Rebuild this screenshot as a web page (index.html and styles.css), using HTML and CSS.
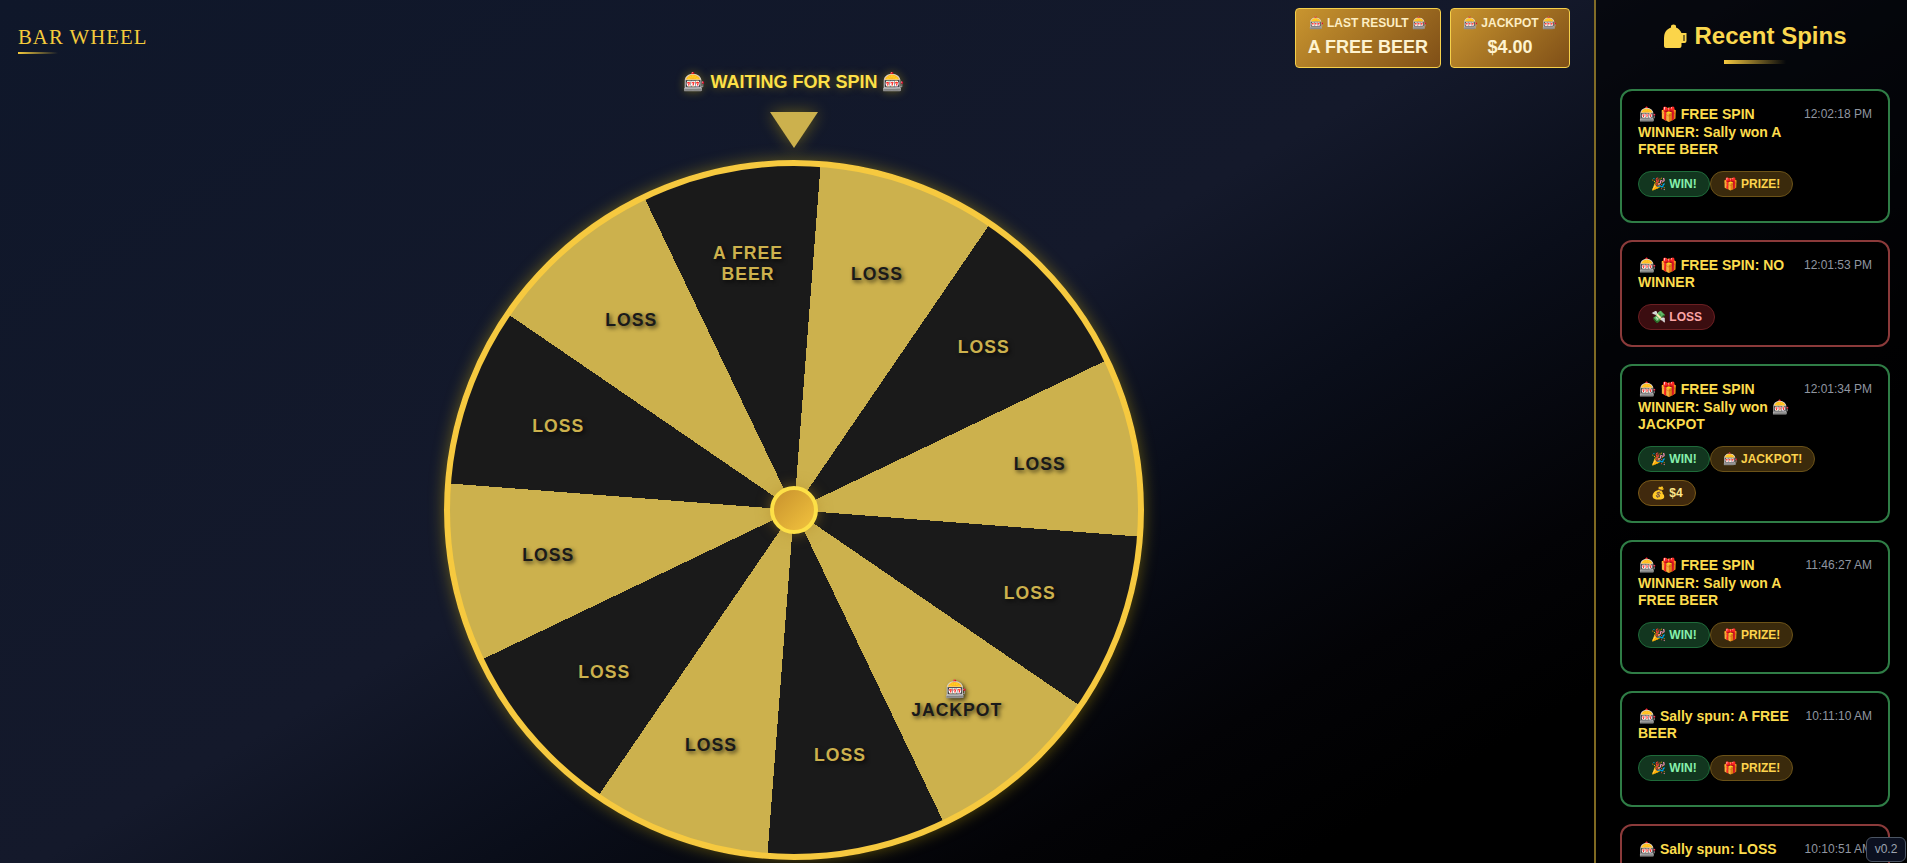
FILE: index.html
```html
<!DOCTYPE html>
<html lang="en">
<head>
<meta charset="utf-8">
<title>Bar Wheel</title>
<link rel="stylesheet" href="styles.css">
</head>
<body>
<div class="app">
  <main class="stage">
    <header class="topbar">
      <div class="brand">
        <h1 class="brand-name">BAR WHEEL</h1>
        <div class="brand-rule"></div>
      </div>
      <div class="stats">
        <div class="stat">
          <div class="stat-label">🎰 LAST RESULT 🎰</div>
          <div class="stat-value">A FREE BEER</div>
        </div>
        <div class="stat">
          <div class="stat-label">🎰 JACKPOT 🎰</div>
          <div class="stat-value">$4.00</div>
        </div>
      </div>
    </header>
    <div class="status">🎰 WAITING FOR SPIN 🎰</div>
    <div class="pointer"></div>
    <div class="wheel">
      <span class="seg seg-on-dark" style="--a:-10.6deg">A FREE BEER</span>
      <span class="seg seg-on-gold" style="--a:19.4deg">LOSS</span>
      <span class="seg seg-on-dark" style="--a:49.4deg">LOSS</span>
      <span class="seg seg-on-gold" style="--a:79.4deg">LOSS</span>
      <span class="seg seg-on-dark" style="--a:109.4deg">LOSS</span>
      <span class="seg seg-on-gold" style="--a:139.4deg">🎰 JACKPOT</span>
      <span class="seg seg-on-dark" style="--a:169.4deg">LOSS</span>
      <span class="seg seg-on-gold" style="--a:199.4deg">LOSS</span>
      <span class="seg seg-on-dark" style="--a:229.4deg">LOSS</span>
      <span class="seg seg-on-gold" style="--a:259.4deg">LOSS</span>
      <span class="seg seg-on-dark" style="--a:289.4deg">LOSS</span>
      <span class="seg seg-on-gold" style="--a:319.4deg">LOSS</span>
      <div class="hub"></div>
    </div>
  </main>
  <aside class="sidebar">
    <h2 class="side-title">
      <svg class="mug" viewBox="0 0 24 24" aria-hidden="true"><path fill-rule="evenodd" d="M2.5 24Q.5 24 .5 22V14Q.5 8 4 5.5 6 4 7.5 3.5V2Q7.5.5 10 .5 12.5.5 12.5 2V3.5Q16 4.5 18 9H23V17Q23 19 21 19H18V22Q18 24 16 24ZM20 11V17H21V11Z"/></svg>
      <span>Recent Spins</span>
    </h2>
    <div class="side-rule"></div>
    <div class="spins">
      <article class="card card-win card-spaced">
        <div class="card-head">
          <div class="card-title">🎰 🎁 FREE SPIN WINNER: Sally won A FREE BEER</div>
          <time class="card-time">12:02:18 PM</time>
        </div>
        <div class="pills"><span class="pill pill-win">🎉 WIN!</span><span class="pill pill-prize">🎁 PRIZE!</span></div>
      </article>
      <article class="card card-loss">
        <div class="card-head">
          <div class="card-title">🎰 🎁 FREE SPIN: NO WINNER</div>
          <time class="card-time">12:01:53 PM</time>
        </div>
        <div class="pills"><span class="pill pill-loss">💸 LOSS</span></div>
      </article>
      <article class="card card-win">
        <div class="card-head">
          <div class="card-title">🎰 🎁 FREE SPIN WINNER: Sally won 🎰 JACKPOT</div>
          <time class="card-time">12:01:34 PM</time>
        </div>
        <div class="pills"><span class="pill pill-win">🎉 WIN!</span><span class="pill pill-prize">🎰 JACKPOT!</span><span class="pill pill-money">💰 $4</span></div>
      </article>
      <article class="card card-win card-spaced">
        <div class="card-head">
          <div class="card-title">🎰 🎁 FREE SPIN WINNER: Sally won A FREE BEER</div>
          <time class="card-time">11:46:27 AM</time>
        </div>
        <div class="pills"><span class="pill pill-win">🎉 WIN!</span><span class="pill pill-prize">🎁 PRIZE!</span></div>
      </article>
      <article class="card card-win card-spaced">
        <div class="card-head">
          <div class="card-title">🎰 Sally spun: A FREE BEER</div>
          <time class="card-time">10:11:10 AM</time>
        </div>
        <div class="pills"><span class="pill pill-win">🎉 WIN!</span><span class="pill pill-prize">🎁 PRIZE!</span></div>
      </article>
      <article class="card card-loss">
        <div class="card-head">
          <div class="card-title">🎰 Sally spun: LOSS</div>
          <time class="card-time">10:10:51 AM</time>
        </div>
      </article>
    </div>
  </aside>
</div>
<div class="version">v0.2</div>
</body>
</html>
```
FILE: styles.css
```css
* { box-sizing: border-box; }

html, body {
  margin: 0;
  height: 100%;
  overflow: hidden;
}

body {
  font-family: "Liberation Sans", Arial, sans-serif;
  background: linear-gradient(150deg, #0f172a 0%, #14192b 45%, #0a0e1a 58%, #030306 73%, #000 82%);
  color: #fff;
}

.app {
  display: flex;
  height: 100vh;
}

/* main stage */
.stage {
  flex: 1;
  min-width: 0;
  padding-right: 6px;
  display: flex;
  flex-direction: column;
  align-items: center;
}

.topbar {
  align-self: stretch;
  display: flex;
  justify-content: space-between;
  align-items: flex-start;
  padding: 8px 18px 0 18px;
  height: 72px;
}

.brand { padding-top: 17px; }

.brand-name {
  margin: 0;
  font-family: "Liberation Serif", "Times New Roman", serif;
  font-size: 20.8px;
  font-weight: 400;
  line-height: 24px;
  letter-spacing: 1px;
  color: #f5cb3c;
}

.brand-rule {
  width: 40px;
  height: 2px;
  margin-top: 3px;
  background: linear-gradient(90deg, #f5cb3c, transparent);
}

.stats {
  display: flex;
  gap: 9px;
}

.stat {
  padding: 6px 12px 7px;
  border: 1px solid #f5d04a;
  border-radius: 4px;
  background: linear-gradient(135deg, #c9952f, #7f4f17);
  text-align: center;
  height: 60px;
}

.stat-label {
  font-size: 12px;
  line-height: 17px;
  font-weight: 700;
  color: #fdeec4;
  white-space: nowrap;
}

.stat-value {
  margin-top: 5px;
  font-size: 18px;
  line-height: 21px;
  font-weight: 700;
  color: #fef3d0;
  white-space: nowrap;
}

.status {
  font-size: 18px;
  line-height: 20px;
  font-weight: 700;
  color: #fde047;
  text-shadow: 0 0 10px rgba(255, 215, 0, .35);
  white-space: nowrap;
}

.pointer {
  flex: none;
  width: 0;
  height: 0;
  margin-top: 20px;
  margin-bottom: 12px;
  border-left: 24px solid transparent;
  border-right: 24px solid transparent;
  border-top: 36px solid #ccb14d;
  filter: drop-shadow(0 0 8px rgba(255, 215, 0, .35));
}

.wheel {
  position: relative;
  flex: none;
  width: 700px;
  height: 700px;
  border: 6px solid #f6c93f;
  border-radius: 50%;
  background: repeating-conic-gradient(from 4.4deg, #ccb14d 0 30deg, #1a1a1a 30deg 60deg);
  box-shadow: 0 0 16px rgba(255, 215, 0, .35);
}

.seg {
  position: absolute;
  left: 50%;
  top: 50%;
  width: 100px;
  text-align: center;
  font-size: 17.6px;
  font-weight: 700;
  letter-spacing: 1px;
  text-shadow: 2px 2px 4px rgba(0, 0, 0, .7);
  transform: translate(-50%, -50%) rotate(var(--a)) translateY(-250px) rotate(calc(-1 * var(--a)));
}

.seg-on-dark { color: #ccb14d; }
.seg-on-gold { color: #1a1a1a; }

.hub {
  position: absolute;
  left: 50%;
  top: 50%;
  width: 48px;
  height: 48px;
  transform: translate(-50%, -50%);
  border: 4px solid #fde047;
  border-radius: 50%;
  background: linear-gradient(135deg, #c8922d, #f2c33e);
  box-shadow: 0 0 14px rgba(180, 140, 40, .5);
}

/* sidebar */
.sidebar {
  flex: none;
  width: 313px;
  height: 100%;
  overflow: hidden;
  padding: 0 17px 0 24px;
  border-left: 2px solid rgba(212, 175, 55, .6);
  background: rgba(0, 0, 0, .6);
}

.side-title {
  display: flex;
  justify-content: center;
  align-items: center;
  gap: 6px;
  margin: 22px 0 0;
  font-size: 24px;
  line-height: 28px;
  font-weight: 700;
  color: #fbd84e;
}

.mug {
  flex: none;
  width: 25px;
  height: 24px;
  fill: #fbd54a;
}

.side-rule {
  width: 62px;
  height: 4px;
  margin: 10px auto 25px;
  background: linear-gradient(90deg, #f6c93f, transparent);
}

.spins {
  display: flex;
  flex-direction: column;
  gap: 17px;
}

.card {
  flex: none;
  padding: 15px 16px 15.5px;
  border: 2px solid;
  border-radius: 12px;
  background: rgba(0, 0, 0, .9);
}

.card-win { border-color: #2f7d46; }
.card-loss { border-color: #8b3a3a; }

.card-head {
  display: flex;
  justify-content: space-between;
  gap: 8px;
  margin-bottom: 12px;
}

.card-title {
  flex: 1;
  font-size: 14px;
  line-height: 17.5px;
  font-weight: 700;
  text-indent: 1px;
  color: #fcdc4d;
}

.card-time {
  flex: none;
  font-size: 12px;
  line-height: 17px;
  color: #9096a0;
  white-space: nowrap;
}

.pills {
  display: flex;
  flex-wrap: wrap;
  row-gap: 8px;
}

.card-spaced .pills { padding-bottom: 8.5px; }

.pill {
  height: 26px;
  padding: 0 12px;
  border: 1px solid;
  border-radius: 13px;
  font-size: 12px;
  line-height: 24px;
  font-weight: 700;
  white-space: nowrap;
}

.pill-win { background: #12361f; border-color: #1f6b3a; color: #86efac; }
.pill-prize { background: #3a2a0c; border-color: #6b5218; color: #fcd34d; }
.pill-loss { background: #3b0d10; border-color: #6b1f22; color: #fca5a5; }
.pill-money { background: #40290d; border-color: #7a5a18; color: #fde68a; }

.version {
  position: fixed;
  right: 1px;
  bottom: 1px;
  width: 40px;
  height: 25px;
  border: 1px solid #4b5563;
  border-radius: 6px;
  background: #0b1020;
  font-size: 12px;
  line-height: 23px;
  text-align: center;
  color: #9ca3af;
}
```
